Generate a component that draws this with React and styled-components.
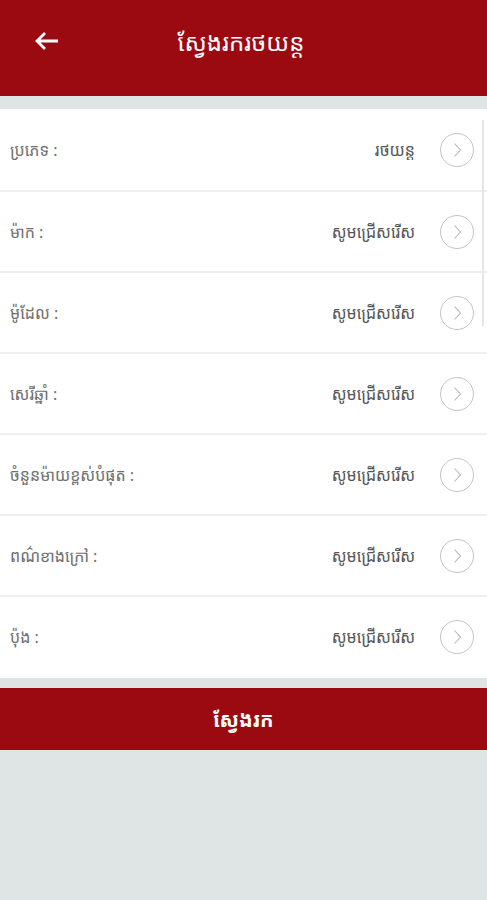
import React from 'react';
import styled, { createGlobalStyle } from 'styled-components';

const Global = createGlobalStyle`
  html, body {
    margin: 0;
    padding: 0;
    background: #dfe4e5;
    font-family: "Noto Sans Khmer", "Khmer OS", "Noto Sans", "DejaVu Sans", sans-serif;
  }
`;

const Page = styled.div`
  width: 487px;
  height: 900px;
  background: #dfe4e5;
  display: flex;
  flex-direction: column;
  position: relative;
  overflow: hidden;
`;

const Header = styled.div`
  height: 96px;
  background: #9b0a11;
  display: flex;
  align-items: center;
  padding-bottom: 14px;
  box-sizing: border-box;
`;

const Back = styled.div`
  width: 96px;
  display: flex;
  justify-content: center;
  padding-right: 2px;
  box-sizing: border-box;
`;

const Title = styled.div`
  flex: 1;
  color: #fff;
  font-size: 24px;
  text-align: center;
  padding-right: 137px;
  padding-left: 36px;
  white-space: nowrap;
`;

const List = styled.div`
  margin-top: 13px;
  padding-bottom: 2px;
  background: #fff;
  display: flex;
  flex-direction: column;
`;

const Row = styled.div`
  height: 81px;
  display: flex;
  align-items: center;
  padding: 0 13px 0 10px;
  border-top: ${p => (p.first ? 'none' : '2px solid #eef0f0')};
  box-sizing: border-box;
`;

const Label = styled.div`
  flex: 1;
  color: #707070;
  font-size: 16px;
`;

const Value = styled.div`
  color: #555;
  font-size: 16px;
  margin-right: 25px;
`;

const Circle = styled.div`
  width: 34px;
  height: 34px;
  border: 1px solid #c4c4c4;
  border-radius: 50%;
  box-sizing: border-box;
  display: flex;
  align-items: center;
  justify-content: center;
`;

const Scroll = styled.div`
  position: absolute;
  right: 3px;
  top: 120px;
  width: 2px;
  height: 206px;
  background: #e6e6e6;
`;

const Button = styled.div`
  margin-top: 10px;
  height: 62px;
  background: #9b0a11;
  color: #fff;
  font-size: 20px;
  font-weight: bold;
  display: flex;
  align-items: center;
  justify-content: center;
`;

const rows = [
  ['ប្រភេទ :', 'រថយន្ត'],
  ['ម៉ាក :', 'សូមជ្រើសរើស'],
  ['ម៉ូដែល :', 'សូមជ្រើសរើស'],
  ['សេរីឆ្នាំ :', 'សូមជ្រើសរើស'],
  ['ចំនួនម៉ាយខ្ពស់បំផុត :', 'សូមជ្រើសរើស'],
  ['ពណ៌ខាងក្រៅ :', 'សូមជ្រើសរើស'],
  ['ប៉ុង :', 'សូមជ្រើសរើស'],
];

const Chevron = () => (
  <svg width="12" height="18" viewBox="0 0 12 18">
    <path d="M3.5 2.5 L9.5 9 L3.5 15.5" fill="none" stroke="#b5b5b5" strokeWidth="1.1" />
  </svg>
);

const App = () => (
  <Page>
    <Global />
    <Header>
      <Back>
        <svg width="26" height="20" viewBox="0 0 26 20">
          <path d="M24 10 H3 M11 2 L3 10 L11 18" fill="none" stroke="#fff" strokeWidth="2.8" />
        </svg>
      </Back>
      <Title>ស្វែងរករថយន្ត</Title>
    </Header>
    <List>
      {rows.map(([l, v], i) => (
        <Row key={i} first={i === 0}>
          <Label>{l}</Label>
          <Value>{v}</Value>
          <Circle><Chevron /></Circle>
        </Row>
      ))}
    </List>
    <Button>ស្វែងរក</Button>
    <Scroll />
  </Page>
);

export default App;
